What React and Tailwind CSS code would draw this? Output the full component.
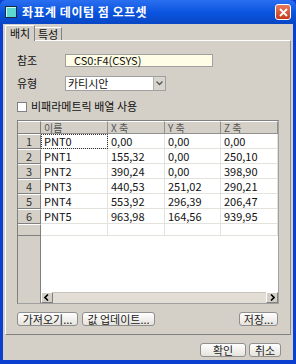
import React from "react";

const rows = [
  ["PNT0", "0,00", "0,00", "0,00"],
  ["PNT1", "155,32", "0,00", "250,10"],
  ["PNT2", "390,24", "0,00", "398,90"],
  ["PNT3", "440,53", "251,02", "290,21"],
  ["PNT4", "553,92", "296,39", "206,47"],
  ["PNT5", "963,98", "164,56", "939,95"],
];

const font = { fontFamily: '"Noto Sans CJK KR", "Liberation Sans", sans-serif' };

function Btn({ children, className = "" }) {
  return (
    <button
      className={`h-[14px] rounded-[3px] border border-[#8f8f8f] bg-gradient-to-b from-[#ffffff] to-[#e6e3dc] text-[11px] leading-[11px] text-[#222] flex items-center justify-center overflow-hidden ${className}`}
    >
      {children}
    </button>
  );
}

function Arrow({ dir }) {
  return (
    <div className="w-[12px] h-[11px] bg-[#d4d0c8] border-t border-l border-t-white border-l-white border-r border-b border-r-[#808080] border-b-[#808080] flex items-center justify-center">
      <svg width="6" height="7" viewBox="0 0 6 7">
        {dir === "left" ? (
          <path d="M4 0.5 L1 3.5 L4 6.5" stroke="#000" strokeWidth="1.6" fill="none" />
        ) : (
          <path d="M2 0.5 L5 3.5 L2 6.5" stroke="#000" strokeWidth="1.6" fill="none" />
        )}
      </svg>
    </div>
  );
}

export default function App() {
  const rowHead = "w-[23px] shrink-0 bg-[#d4d0c8] border-t border-t-white border-r border-r-[#808080] border-b border-b-[#808080] flex items-center justify-center text-[11px] leading-[11px] text-[#333]";
  const cell = "shrink-0 border-r border-b border-[#e4e2dc] pl-[3px] pt-[1px] flex items-center text-[11px] leading-[11px] text-[#111]";
  const hcell = "shrink-0 bg-[#d4d0c8] border-t border-t-white border-r border-r-[#909090] border-b border-b-[#909090] pl-[3px] flex items-center text-[10px] leading-[10px] text-[#555]";

  return (
    <div className="w-[296px] h-[364px] bg-[#0b3fcf] flex flex-col overflow-hidden" style={font}>
      {/* title bar */}
      <div className="h-[24px] shrink-0 flex items-center bg-gradient-to-b from-[#2a6ff0] via-[#0a55e0] to-[#0846c4] pl-[5px] pr-[5px] rounded-t-[6px]">
        <div className="w-[12px] h-[12px] border border-[#1a2a40] bg-[#5fd8d0] shadow-[inset_1px_1px_0_#c8fff8]" />
        <span className="ml-[5px] text-white text-[12px] font-bold tracking-[0.5px]">좌표계 데이텀 점 오프셋</span>
        <div className="ml-auto w-[16px] h-[16px] rounded-[3px] border border-white bg-gradient-to-b from-[#e87a5a] to-[#c43a1a] flex items-center justify-center">
          <svg width="9" height="9" viewBox="0 0 9 9">
            <path d="M1 1 L8 8 M8 1 L1 8" stroke="#fff" strokeWidth="1.8" />
          </svg>
        </div>
      </div>

      {/* body */}
      <div className="flex-1 mx-[3px] mb-[4px] bg-[#d4d0c8] flex flex-col">
        {/* tabs */}
        <div className="flex items-end h-[16px] pl-[2px]">
          <div className="h-[16px] w-[30px] border-t border-l border-r border-t-white border-l-white border-r-[#808080] flex items-center justify-center text-[11px] leading-[11px] text-[#111] bg-[#d4d0c8] relative top-[1px]">
            배치
          </div>
          <div className="h-[13px] w-[27px] border-t border-r border-t-white border-r-[#808080] flex items-center justify-center text-[11px] leading-[11px] text-[#111]">
            특성
          </div>
        </div>

        {/* tab panel */}
        <div className="mx-[2px] h-[295px] border-t border-t-white border-l border-l-white border-r border-r-[#909090] border-b border-b-[#808080] flex flex-col px-[11px]">
          <div className="flex items-center mt-[13px] h-[13px]">
            <span className="w-[48px] text-[11px] leading-[11px] text-[#111]">참조</span>
            <div className="w-[148px] h-[13px] bg-[#fffde6] border border-[#a0a0a0] text-[11px] leading-none pl-[8px] flex items-center text-[#111]">
              CS0:F4(CSYS)
            </div>
          </div>
          <div className="flex items-center mt-[9px] h-[15px]">
            <span className="w-[48px] text-[11px] leading-[11px] text-[#111]">유형</span>
            <div className="w-[101px] h-[15px] bg-white border border-[#a0a0a0] flex items-center">
              <span className="flex-1 pl-[2px] text-[11px] leading-[11px] text-[#111]">카티시안</span>
              <div className="w-[12px] h-[13px] bg-[#d8d5ce] border-l border-[#b0b0b0] flex items-center justify-center">
                <svg width="7" height="5" viewBox="0 0 7 5">
                  <path d="M0.5 0.5 L3.5 3.5 L6.5 0.5" stroke="#555" strokeWidth="1.3" fill="none" />
                </svg>
              </div>
            </div>
          </div>
          <div className="flex items-center mt-[10px] h-[11px]">
            <div className="w-[10px] h-[10px] bg-white border border-[#808080]" />
            <span className="ml-[4px] text-[11px] leading-[11px] text-[#111]">비패라메트릭 배열 사용</span>
          </div>

          {/* grid */}
          <div className="mt-[8px] w-[262px] h-[184px] border border-t-[#808080] border-l-[#808080] border-r-[#a0a0a0] border-b-[#a0a0a0] flex flex-col">
            <div className="flex h-[13px]">
              <div className="w-[23px] shrink-0 bg-[#d4d0c8] border-t border-t-white border-r border-r-[#808080] border-b border-b-[#808080]" />
              <div className={`${hcell} w-[67px] text-[#222]`}>이름</div>
              <div className={`${hcell} w-[57px]`}>X 축</div>
              <div className={`${hcell} w-[56px]`}>Y 축</div>
              <div className={`${hcell} w-[57px]`}>Z 축</div>
            </div>
            {rows.map((r, i) => (
              <div key={i} className="flex h-[15px] bg-white">
                <div className={rowHead}>{i + 1}</div>
                <div className={`${cell} w-[67px] ${i === 0 ? "outline outline-1 outline-dotted outline-[#333] -outline-offset-1" : ""}`}>{r[0]}</div>
                <div className={`${cell} w-[57px]`}>{r[1]}</div>
                <div className={`${cell} w-[56px]`}>{r[2]}</div>
                <div className={`${cell} w-[57px]`}>{r[3]}</div>
              </div>
            ))}
            <div className="flex h-[12px] bg-white">
              <div className={rowHead} />
              <div className={`${cell} w-[67px]`} />
              <div className={`${cell} w-[57px]`} />
              <div className={`${cell} w-[56px]`} />
              <div className={`${cell} w-[57px]`} />
            </div>
            <div className="flex flex-1">
              <div className="w-[23px] shrink-0 bg-[#d4d0c8] border-r border-r-[#808080]" />
              <div className="flex-1 bg-white" />
            </div>
            <div className="flex h-[11px]">
              <div className="w-[23px] shrink-0 bg-[#d4d0c8] border-r border-r-[#808080]" />
              <Arrow dir="left" />
              <div className="flex-1 bg-[#e2ded6] border-t border-[#c8c4bc]" />
              <Arrow dir="right" />
            </div>
          </div>

          {/* grid buttons */}
          <div className="flex mt-[8px]">
            <Btn className="w-[61px]">가져오기...</Btn>
            <Btn className="w-[73px] ml-[4px]">값 업데이트...</Btn>
            <Btn className="w-[39px] ml-auto mr-[1px]">저장...</Btn>
          </div>
        </div>

        {/* dialog buttons */}
        <div className="flex justify-end mt-[8px] pr-[12px]">
          <Btn className="w-[46px] h-[13px]">확인</Btn>
          <Btn className="w-[32px] h-[13px] ml-[3px]">취소</Btn>
        </div>
      </div>
    </div>
  );
}
